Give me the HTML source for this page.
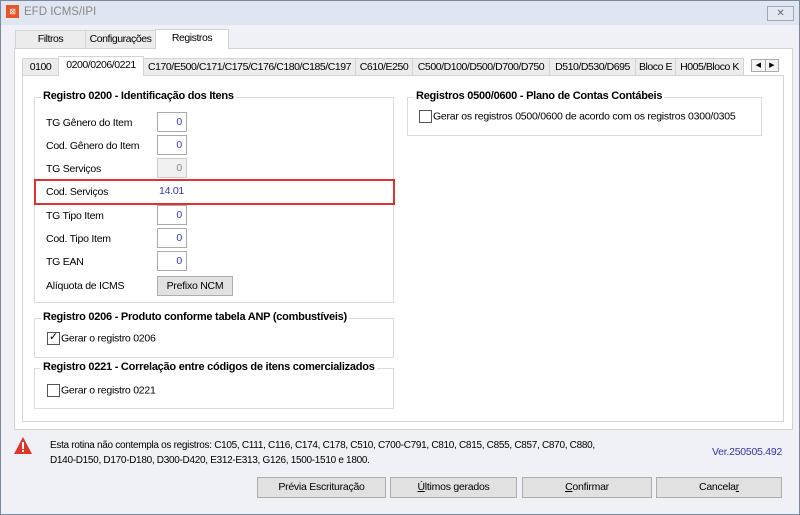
<!DOCTYPE html>
<html><head><meta charset="utf-8"><style>
*{box-sizing:border-box;margin:0;padding:0}
body{width:800px;height:515px;overflow:hidden;font-family:"Liberation Sans",sans-serif;font-size:10.5px;letter-spacing:-0.25px;color:#000;background:#fff;position:relative}
.abs{position:absolute}
.win{left:0;top:0;width:800px;height:515px;border:1px solid #7a8a9e;background:#eff1f7}
.title{left:1px;top:1px;width:798px;height:24px;background:#dfe6f1}
.tab{position:absolute;border:1px solid #d4d4d4;border-bottom:none;background:#ececec;text-align:center;line-height:17px;white-space:nowrap;overflow:hidden;letter-spacing:-0.45px}
.lbl{position:absolute;left:46px}
.inp{position:absolute;left:157px;width:30px;height:20px;border:1px solid #aaa;background:#fff;color:#3333cc;text-align:right;padding-right:4px;line-height:18px}
.grp{position:absolute;border:1px solid #dcdcdc}
.gt{position:absolute;font-weight:bold;font-size:11px;letter-spacing:-0.25px;background:#fff;padding:0 2px;top:-8px;left:6px;white-space:nowrap}
.cb{display:inline-block;width:13px;height:13px;border:1px solid #555;vertical-align:middle;background:#fff;margin-right:1px;position:relative}
.btn{position:absolute;top:477px;height:21px;border:1px solid #adadad;background:#e1e1e1;text-align:center;line-height:19px}
</style></head><body>
<div class="abs win"></div>
<div class="abs title"></div>
<div class="abs" style="left:6px;top:5px;width:13px;height:13px;background:#e8552a;color:#fff;font-size:8px;line-height:13px;text-align:center">⊠</div>
<div class="abs" style="left:24px;top:6px;color:#888;font-size:11.5px;letter-spacing:0">EFD ICMS/IPI</div>
<div class="abs" style="left:767px;top:6px;width:27px;height:15px;border:1px solid #9aa8b8;background:#e4e9f1;color:#666;font-size:10px;text-align:center;line-height:13px">✕</div>

<div class="tab" style="left:15px;top:30px;width:71px;height:19px">Filtros</div>
<div class="tab" style="left:85px;top:30px;width:71px;height:19px">Configurações</div>
<div class="tab" style="left:155px;top:29px;width:74px;height:20px;background:#fff;z-index:2;line-height:16px">Registros</div>
<div class="abs" style="left:14px;top:48px;width:779px;height:382px;border:1px solid #d4d4d4;background:#fff"></div>

<div class="tab" style="left:22px;top:58px;width:37px;height:18px">0100</div>
<div class="tab" style="left:58px;top:56px;width:86px;height:20px;background:#fff;z-index:2;line-height:16px">0200/0206/0221</div>
<div class="tab" style="left:143px;top:58px;width:213px;height:18px">C170/E500/C171/C175/C176/C180/C185/C197</div>
<div class="tab" style="left:355px;top:58px;width:58px;height:18px">C610/E250</div>
<div class="tab" style="left:412px;top:58px;width:138px;height:18px">C500/D100/D500/D700/D750</div>
<div class="tab" style="left:549px;top:58px;width:87px;height:18px">D510/D530/D695</div>
<div class="tab" style="left:635px;top:58px;width:41px;height:18px">Bloco E</div>
<div class="tab" style="left:675px;top:58px;width:69px;height:18px">H005/Bloco K</div>
<div class="abs" style="left:751px;top:59px;width:28px;height:13px;border:1px solid #aaa;background:#f4f4f4;font-size:7px;line-height:11px;display:flex"><span style="flex:1;text-align:center;border-right:1px solid #aaa">◀</span><span style="flex:1;text-align:center">▶</span></div>
<div class="abs" style="left:22px;top:75px;width:762px;height:347px;border:1px solid #d4d4d4;background:#fff"></div>

<div class="grp" style="left:34px;top:97px;width:360px;height:206px"><div class="gt">Registro 0200 - Identificação dos Itens</div></div>
<div class="lbl" style="top:117px">TG Gênero do Item</div><div class="inp" style="top:112px">0</div>
<div class="lbl" style="top:140px">Cod. Gênero do Item</div><div class="inp" style="top:135px">0</div>
<div class="lbl" style="top:163px">TG Serviços</div><div class="inp" style="top:158px;background:#f0f0f0;border-color:#ccc;color:#888">0</div>
<div class="lbl" style="top:186px">Cod. Serviços</div><div class="inp" style="top:182px;border:none;text-align:left;padding-left:2px">14.01</div>
<div class="abs" style="left:34px;top:179px;width:361px;height:26px;border:2px solid #e03030"></div>
<div class="lbl" style="top:210px">TG Tipo Item</div><div class="inp" style="top:205px">0</div>
<div class="lbl" style="top:233px">Cod. Tipo Item</div><div class="inp" style="top:228px">0</div>
<div class="lbl" style="top:256px">TG EAN</div><div class="inp" style="top:251px">0</div>
<div class="lbl" style="top:280px">Alíquota de ICMS</div>
<div class="abs" style="left:157px;top:276px;width:76px;height:20px;border:1px solid #adadad;background:#e1e1e1;text-align:center;line-height:18px">Prefixo NCM</div>

<div class="grp" style="left:34px;top:318px;width:360px;height:40px"><div class="gt">Registro 0206 - Produto conforme tabela ANP (combustíveis)</div>
<div class="abs" style="left:12px;top:13px;white-space:nowrap"><span class="cb"><span style="position:absolute;left:1px;top:-3px;font-size:11px">✓</span></span>Gerar o registro 0206</div></div>
<div class="grp" style="left:34px;top:368px;width:360px;height:41px"><div class="gt">Registro 0221 - Correlação entre códigos de itens comercializados</div>
<div class="abs" style="left:12px;top:15px;white-space:nowrap"><span class="cb"></span>Gerar o registro 0221</div></div>

<div class="grp" style="left:407px;top:97px;width:355px;height:39px"><div class="gt">Registros 0500/0600 - Plano de Contas Contábeis</div>
<div class="abs" style="left:11px;top:12px;white-space:nowrap"><span class="cb"></span>Gerar os registros 0500/0600 de acordo com os registros 0300/0305</div></div>

<svg class="abs" style="left:13px;top:436px" width="20" height="19"><path d="M10 1 L19 18 L1 18 Z" fill="#e0352b"/><rect x="9" y="6" width="2" height="7" fill="#fff"/><rect x="9" y="14" width="2" height="2" fill="#fff"/></svg>
<div class="abs" style="left:50px;top:438px;line-height:15px;font-size:10px;letter-spacing:-0.3px;white-space:nowrap">Esta rotina não contempla os registros: C105, C111, C116, C174, C178, C510, C700-C791, C810, C815, C855, C857, C870, C880,<br>D140-D150, D170-D180, D300-D420, E312-E313, G126, 1500-1510 e 1800.</div>
<div class="abs" style="left:712px;top:446px;color:#3333aa;font-size:10.5px">Ver.250505.492</div>

<div class="btn" style="left:257px;width:129px">Prévia Escrituração</div>
<div class="btn" style="left:390px;width:127px"><u>Ú</u>ltimos gerados</div>
<div class="btn" style="left:522px;width:130px"><u>C</u>onfirmar</div>
<div class="btn" style="left:656px;width:126px">Cancela<u>r</u></div>
</body></html>
